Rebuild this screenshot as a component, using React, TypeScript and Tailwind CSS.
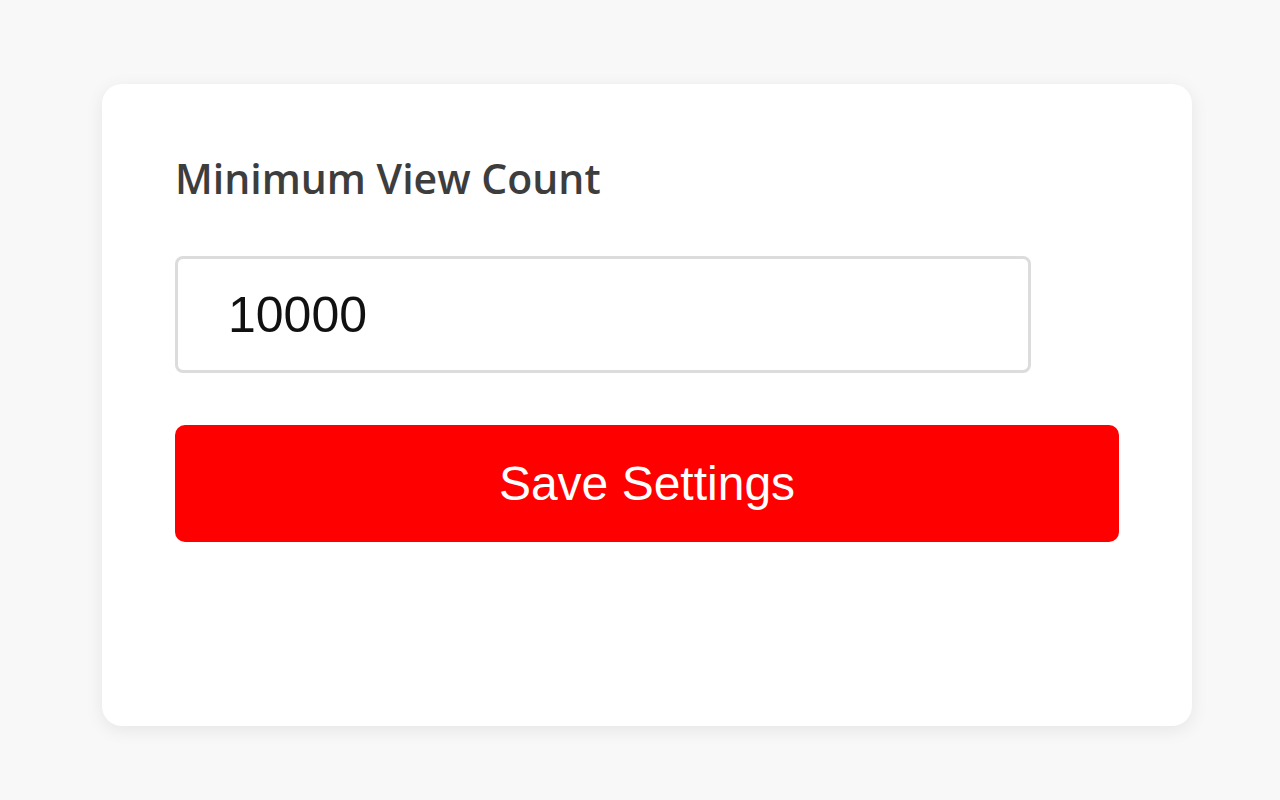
import React, { useState } from 'react';

const App = () => {
  const [minViews, setMinViews] = useState('10000');

  return (
    <div className="flex min-h-[800px] w-[1280px] items-start bg-[#f8f8f8] pt-[84px] pl-[102px]">
      <div className="flex h-[642px] w-[1090px] flex-col rounded-[20px] bg-white px-[73px] pt-[69px] shadow-[0_4px_18px_rgba(0,0,0,0.08)]">
        <label className="block font-['Open_Sans','Noto_Sans',sans-serif] text-[41px] leading-[50px] font-semibold text-[#3d3d3d]">
          Minimum View Count
        </label>
        <input
          type="text"
          value={minViews}
          onChange={(e) => setMinViews(e.target.value)}
          className="mt-[53px] block h-[117px] w-[856px] rounded-[8px] border-[3px] border-[#dcdcdc] bg-white pl-[50px] font-['Liberation_Sans',Arial,sans-serif] text-[50px] text-[#111] outline-none"
        />
        <button className="mt-[52px] block h-[117px] w-full rounded-[10px] bg-[#ff0000] font-['Liberation_Sans',Arial,sans-serif] text-[48px] text-white">
          Save Settings
        </button>
      </div>
    </div>
  );
};

export default App;
